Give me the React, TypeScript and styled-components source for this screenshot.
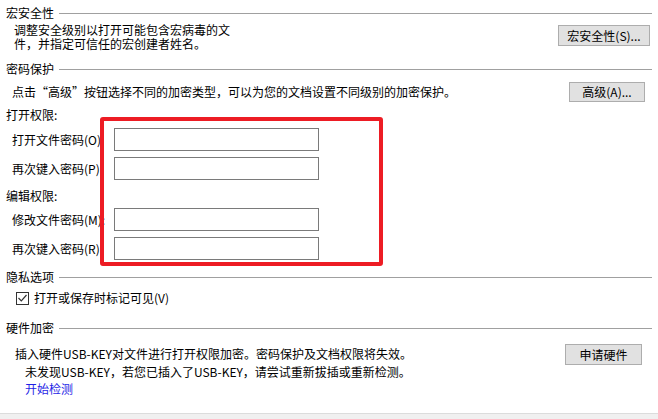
import React from "react";
import styled, { createGlobalStyle } from "styled-components";

const GlobalStyle = createGlobalStyle`
  html, body {
    margin: 0;
    padding: 0;
    background: #ffffff;
  }
  body {
    font-family: "Noto Sans CJK SC", "DejaVu Sans", sans-serif;
    font-size: 12px;
    color: #000;
  }
`;

const Page = styled.div`
  width: 658px;
  height: 419px;
  display: flex;
  flex-direction: column;
  overflow: hidden;
`;

const Content = styled.div`
  flex: 1;
  padding: 6px 6px 0 6px;
  display: flex;
  flex-direction: column;
`;

const SectionHead = styled.div<{ $mt?: number }>`
  display: flex;
  align-items: center;
  height: 14px;
  line-height: 14px;
  margin-top: ${(p) => p.$mt ?? 0}px;
  white-space: nowrap;

  &::after {
    content: "";
    flex: 1;
    height: 1px;
    background: #a0a0a0;
    margin-left: 5px;
  }
`;

const Row = styled.div<{ $mt?: number; $align?: string; $pr?: number }>`
  display: flex;
  justify-content: space-between;
  align-items: ${(p) => p.$align ?? "center"};
  margin-top: ${(p) => p.$mt ?? 0}px;
  padding-right: ${(p) => p.$pr ?? 0}px;
`;

const Desc = styled.div<{ $pl?: number; $w?: number }>`
  padding-left: ${(p) => p.$pl ?? 8}px;
  width: ${(p) => (p.$w ? `${p.$w}px` : "auto")};
  line-height: 14px;
`;

const ButtonSlot = styled.div`
  padding-top: 2px;
`;

const Button = styled.button<{ $w: number; $h?: number }>`
  width: ${(p) => p.$w}px;
  height: ${(p) => p.$h ?? 21}px;
  flex-shrink: 0;
  padding: 0;
  background: #e1e1e1;
  border: 1px solid #adadad;
  border-radius: 0;
  font-family: inherit;
  font-size: 12px;
  color: #000;
  line-height: 1;
`;

const GroupLabel = styled.div<{ $mt?: number }>`
  height: 14px;
  line-height: 14px;
  margin-top: ${(p) => p.$mt ?? 0}px;
`;

const PasswordArea = styled.div`
  position: relative;
`;

const FieldRow = styled.div<{ $mt?: number }>`
  display: flex;
  align-items: center;
  margin-top: ${(p) => p.$mt ?? 0}px;
  padding-left: 6px;
`;

const FieldLabel = styled.label`
  width: 102px;
  flex-shrink: 0;
  white-space: nowrap;
`;

const Input = styled.input`
  box-sizing: border-box;
  width: 205px;
  height: 23px;
  border: 1px solid #7a7a7a;
  border-radius: 0;
  padding: 0 3px;
  margin: 0;
  outline: none;
  background: #fff;
`;

const Highlight = styled.div`
  position: absolute;
  left: 94px;
  top: -5px;
  width: 275px;
  height: 141px;
  border: 4px solid #ed1c24;
  border-radius: 3px;
  pointer-events: none;
`;

const CheckRow = styled.label<{ $mt?: number }>`
  display: flex;
  align-items: center;
  gap: 5px;
  margin-top: ${(p) => p.$mt ?? 0}px;
  padding-left: 10px;
  height: 14px;
  line-height: 14px;
`;

const CheckBox = styled.span`
  box-sizing: border-box;
  width: 13px;
  height: 13px;
  border: 1px solid #333;
  display: inline-flex;
  align-items: center;
  justify-content: center;
  background: #fff;
`;

const HardwareText = styled.div`
  padding-left: 9px;
  padding-top: 3px;
`;

const Line = styled.div<{ $indent?: number; $h?: number }>`
  padding-left: ${(p) => p.$indent ?? 0}px;
  height: ${(p) => p.$h ?? 17}px;
  line-height: 14px;
  white-space: nowrap;
`;

const Link = styled.a`
  color: #1f1fe6;
  text-decoration: none;
  cursor: pointer;
`;

const Footer = styled.div`
  height: 5px;
  border-top: 1px solid #dcdcdc;
  background: #f0f0f0;
`;

export default function App() {
  return (
    <Page>
      <GlobalStyle />
      <Content>
        <SectionHead>宏安全性</SectionHead>
        <Row $mt={3} $align="flex-start" $pr={2}>
          <Desc $w={232}>调整安全级别以打开可能包含宏病毒的文件，并指定可信任的宏创建者姓名。</Desc>
          <ButtonSlot>
            <Button $w={92}>宏安全性(S)...</Button>
          </ButtonSlot>
        </Row>

        <SectionHead $mt={11}>密码保护</SectionHead>
        <Row $mt={6} $pr={7}>
          <Desc $pl={6}>点击“高级”按钮选择不同的加密类型，可以为您的文档设置不同级别的加密保护。</Desc>
          <Button $w={76} $h={20}>高级(A)...</Button>
        </Row>

        <GroupLabel $mt={6}>打开权限:</GroupLabel>
        <PasswordArea>
          <FieldRow $mt={6}>
            <FieldLabel>打开文件密码(O):</FieldLabel>
            <Input type="password" />
          </FieldRow>
          <FieldRow $mt={6}>
            <FieldLabel>再次键入密码(P):</FieldLabel>
            <Input type="password" />
          </FieldRow>
          <GroupLabel $mt={9}>编辑权限:</GroupLabel>
          <FieldRow $mt={5}>
            <FieldLabel>修改文件密码(M):</FieldLabel>
            <Input type="password" />
          </FieldRow>
          <FieldRow $mt={6}>
            <FieldLabel>再次键入密码(R):</FieldLabel>
            <Input type="password" />
          </FieldRow>
          <Highlight />
        </PasswordArea>

        <SectionHead $mt={10}>隐私选项</SectionHead>
        <CheckRow $mt={7}>
          <CheckBox>
            <svg width="9" height="8" viewBox="0 0 9 8">
              <path d="M0.5 4 L3.3 6.8 L8.5 1" fill="none" stroke="#333" strokeWidth="1.2" />
            </svg>
          </CheckBox>
          打开或保存时标记可见(V)
        </CheckRow>

        <SectionHead $mt={16}>硬件加密</SectionHead>
        <Row $mt={9} $align="flex-start" $pr={10}>
          <HardwareText>
            <Line $h={18}>插入硬件USB-KEY对文件进行打开权限加密。密码保护及文档权限将失效。</Line>
            <Line $indent={10}>未发现USB-KEY，若您已插入了USB-KEY，请尝试重新拔插或重新检测。</Line>
            <Line $indent={10}>
              <Link>开始检测</Link>
            </Line>
          </HardwareText>
          <Button $w={77}>申请硬件</Button>
        </Row>
      </Content>
      <Footer />
    </Page>
  );
}
